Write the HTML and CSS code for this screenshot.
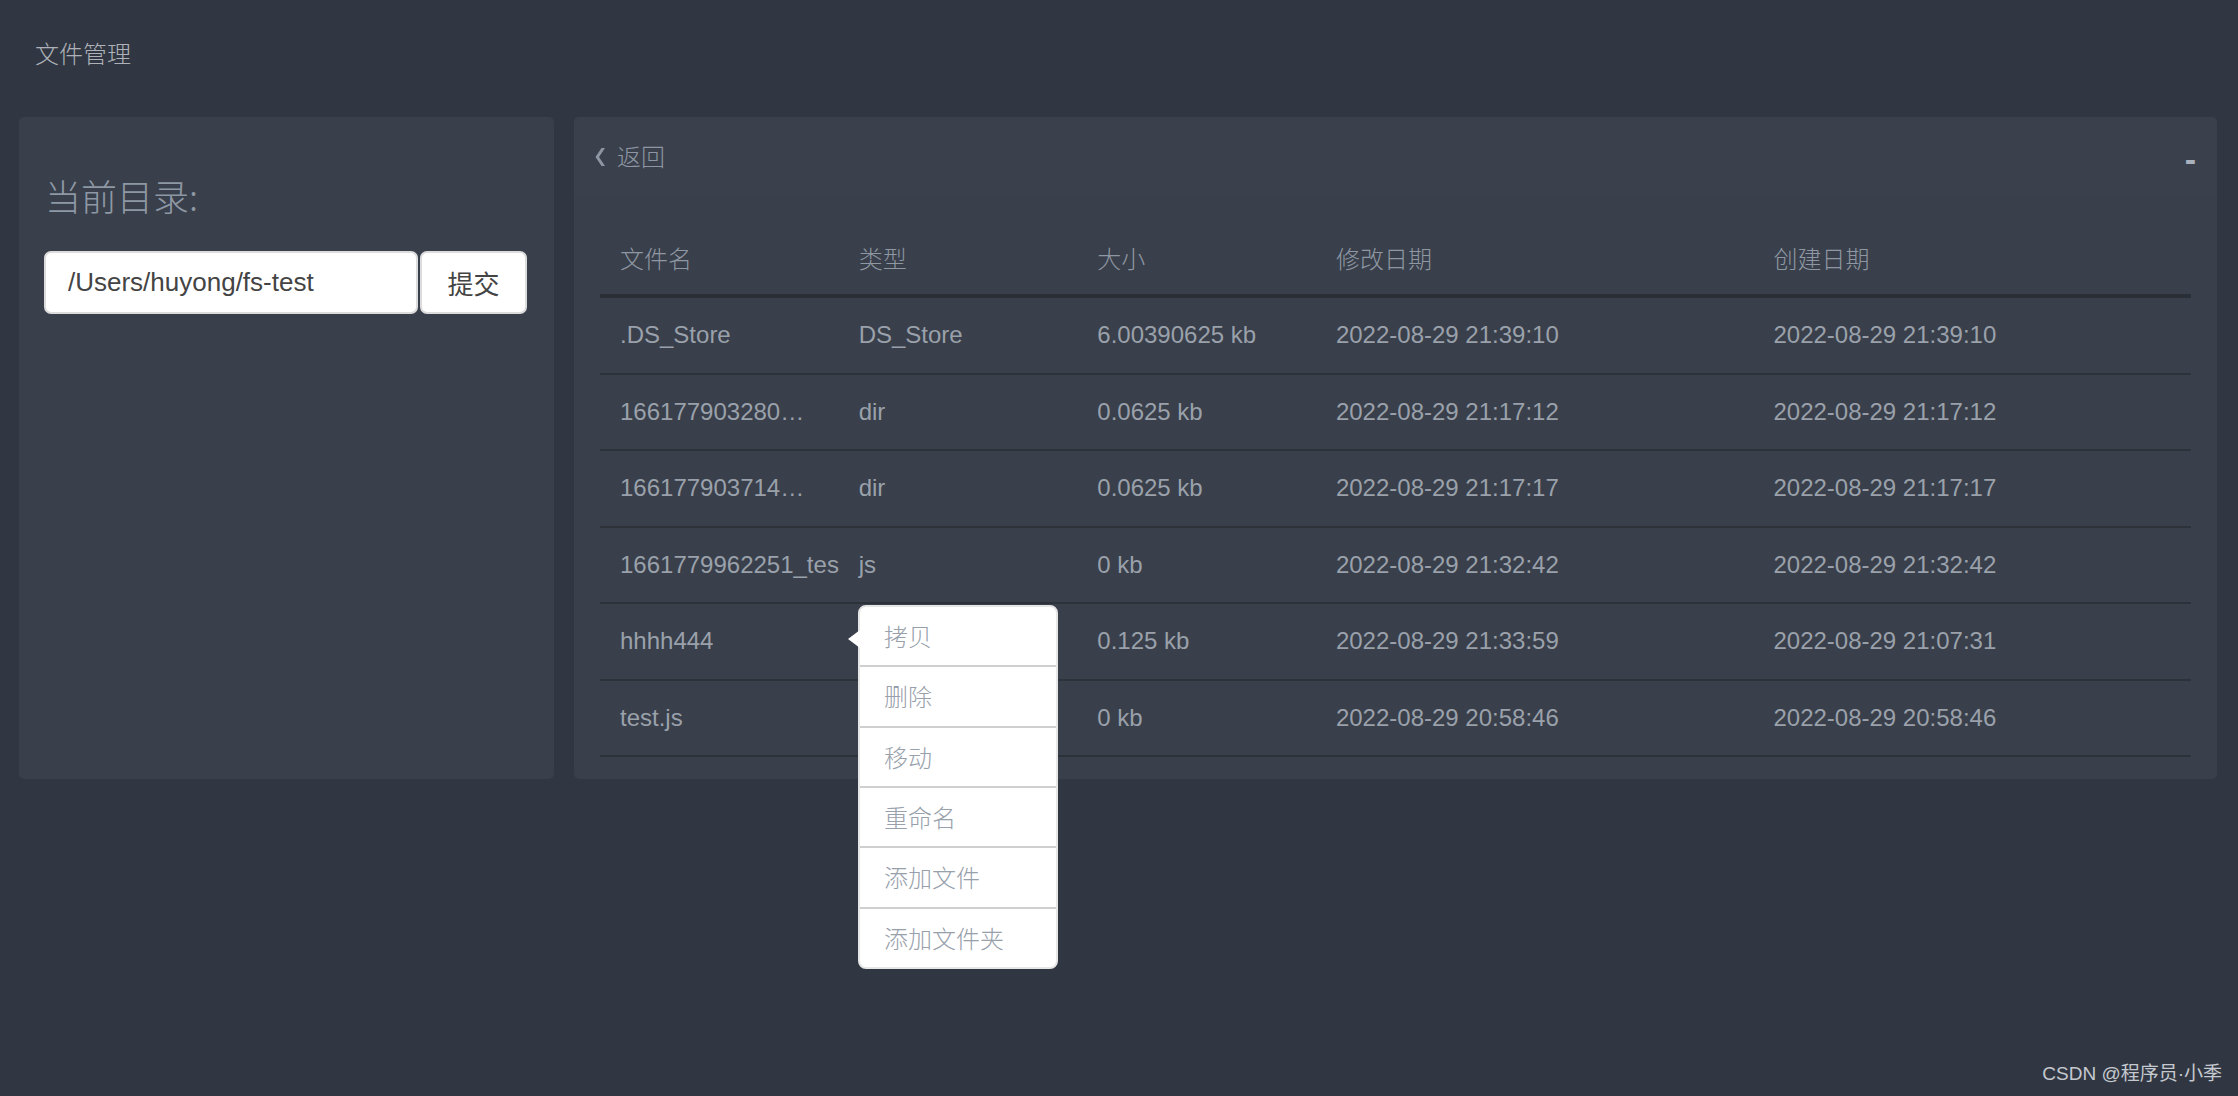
FILE: index.html
```html
<!DOCTYPE html>
<html lang="zh-CN">
<head>
<meta charset="utf-8">
<title>文件管理</title>
<link rel="stylesheet" href="styles.css">
</head>
<body>
<header class="topbar">文件管理</header>
<main class="layout">
  <section class="panel side">
    <h2 class="dir-title">当前目录:</h2>
    <form class="dir-form">
      <input class="dir-input" type="text" value="/Users/huyong/fs-test">
      <button class="btn" type="button">提交</button>
    </form>
  </section>
  <section class="panel files">
    <div class="files-head">
      <a class="back">
        <svg class="back-icon" width="10" height="18" viewBox="0 0 10 18"><path d="M10 0 L4 9 L10 18 L6.5 18 L0.5 9 L6.5 0 Z" fill="currentColor"/></svg>
        <span>返回</span>
      </a>
      <span class="collapse">-</span>
    </div>
    <div class="grid-table">
      <div class="tr th"><div class="td">文件名</div><div class="td">类型</div><div class="td">大小</div><div class="td">修改日期</div><div class="td">创建日期</div></div>
      <div class="tr"><div class="td">.DS_Store</div><div class="td">DS_Store</div><div class="td">6.00390625 kb</div><div class="td">2022-08-29 21:39:10</div><div class="td">2022-08-29 21:39:10</div></div>
      <div class="tr"><div class="td">166177903280…</div><div class="td">dir</div><div class="td">0.0625 kb</div><div class="td">2022-08-29 21:17:12</div><div class="td">2022-08-29 21:17:12</div></div>
      <div class="tr"><div class="td">166177903714…</div><div class="td">dir</div><div class="td">0.0625 kb</div><div class="td">2022-08-29 21:17:17</div><div class="td">2022-08-29 21:17:17</div></div>
      <div class="tr"><div class="td">1661779962251_tes</div><div class="td">js</div><div class="td">0 kb</div><div class="td">2022-08-29 21:32:42</div><div class="td">2022-08-29 21:32:42</div></div>
      <div class="tr"><div class="td">hhhh444</div><div class="td">dir</div><div class="td">0.125 kb</div><div class="td">2022-08-29 21:33:59</div><div class="td">2022-08-29 21:07:31</div></div>
      <div class="tr"><div class="td">test.js</div><div class="td">js</div><div class="td">0 kb</div><div class="td">2022-08-29 20:58:46</div><div class="td">2022-08-29 20:58:46</div></div>
    </div>
    <ul class="ctx-menu">
      <li>拷贝</li>
      <li>删除</li>
      <li>移动</li>
      <li>重命名</li>
      <li>添加文件</li>
      <li>添加文件夹</li>
    </ul>
  </section>
</main>
<div class="watermark">CSDN @程序员·小季</div>
</body>
</html>
```
FILE: styles.css
```css
html, body {
  margin: 0;
  padding: 0;
}
body {
  background: #313742;
  width: 2238px;
  height: 1096px;
  overflow: hidden;
  position: relative;
  font-family: "Liberation Sans", "Noto Sans CJK SC", sans-serif;
  color: #9aa1aa;
}
.topbar {
  height: 117px;
  box-sizing: border-box;
  padding: 35px 0 0 35px;
  font-size: 24px;
  line-height: 36px;
  color: #aeb2b8;
  font-family: "Noto Sans CJK SC", sans-serif;
  font-weight: 300;
}
.layout {
  display: flex;
  gap: 20px;
  padding: 0 21px 0 19px;
  align-items: stretch;
}
.panel {
  background: #393f4b;
  border-radius: 5px;
}
.side {
  width: 535px;
  flex: none;
  box-sizing: border-box;
  padding: 25px 25px;
}
.dir-title {
  margin: 26px 0 29px 1px;
  font-size: 36px;
  line-height: 54px;
  font-weight: 300;
  color: #8e98a5;
  font-family: "Noto Sans CJK SC", sans-serif;
}
.dir-form {
  display: flex;
  gap: 2px;
  margin: 0;
}
.dir-input {
  width: 374px;
  height: 63px;
  box-sizing: border-box;
  border: 2px solid #dcdcdc;
  border-radius: 7px;
  background: #fff;
  padding: 0 0 0 22px;
  font-family: "Liberation Sans", sans-serif;
  font-size: 26px;
  color: #444;
  outline: none;
}
.btn {
  width: 107px;
  height: 63px;
  box-sizing: border-box;
  border: 2px solid #dcdcdc;
  border-radius: 7px;
  background: #fff;
  font-family: "Noto Sans CJK SC", sans-serif;
  font-size: 26px;
  color: #444;
  padding: 0;
}
.files {
  flex: 1;
  position: relative;
  padding-bottom: 22px;
}
.files-head {
  height: 81px;
  padding: 0 21px;
  display: flex;
  align-items: center;
  justify-content: space-between;
  background: #3a404c;
  border-radius: 5px 5px 0 0;
}
.back {
  display: flex;
  align-items: center;
  gap: 12px;
  color: #8d96a2;
  font-family: "Noto Sans CJK SC", sans-serif;
  font-weight: 300;
  font-size: 24px;
  line-height: 36px;
  padding-bottom: 3px;
}
.back-icon {
  display: block;
  margin-top: 2px;
}
.collapse {
  font-family: "Liberation Sans", sans-serif;
  font-weight: bold;
  font-size: 34px;
  line-height: 36px;
  color: #a9b1bc;
  margin-top: 2px;
}
.grid-table {
  margin: 22px 26px 0;
}
.tr {
  display: grid;
  grid-template-columns: 15% 15% 15% 27.5% 27.5%;
  align-items: center;
  height: 74.5px;
  border-bottom: 2px solid #2c313a;
  font-size: 24px;
  color: #9aa1aa;
}
.tr.th {
  height: 74px;
  border-bottom: 4px solid #2a2f37;
  color: #8e97a2;
  font-family: "Noto Sans CJK SC", sans-serif;
  font-weight: 300;
}
.td {
  padding-left: 20px;
  white-space: nowrap;
  overflow: hidden;
}
.ctx-menu {
  position: absolute;
  left: 284px;
  top: 488px;
  width: 200px;
  box-sizing: border-box;
  margin: 0;
  padding: 0;
  list-style: none;
  background: #fff;
  border: 2px solid #e6e6e6;
  border-radius: 8px;
}
.ctx-menu::before {
  content: "";
  position: absolute;
  left: -12px;
  top: 23px;
  border-right: 12px solid #fff;
  border-top: 9px solid transparent;
  border-bottom: 9px solid transparent;
}
.ctx-menu li {
  height: 58.33px;
  line-height: 58px;
  padding-left: 24px;
  font-family: "Noto Sans CJK SC", sans-serif;
  font-weight: 300;
  font-size: 24px;
  color: #97a0ab;
}
.ctx-menu li + li {
  border-top: 2px solid #cfcfcf;
}
.watermark {
  position: absolute;
  right: 16px;
  bottom: 11px;
  font-size: 19px;
  line-height: 22px;
  color: #c5c9cf;
  font-family: "Liberation Sans", "Noto Sans CJK SC", sans-serif;
}
```
